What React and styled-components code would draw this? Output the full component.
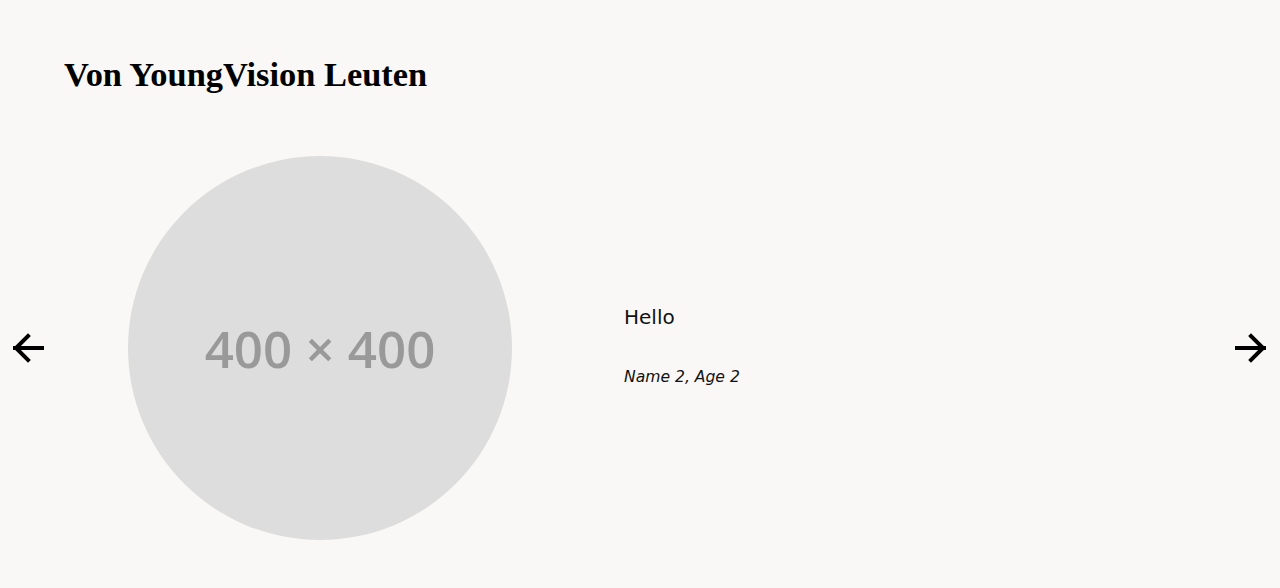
import React from "react";
import styled, { createGlobalStyle } from "styled-components";

const GlobalStyle = createGlobalStyle`
  html, body {
    margin: 0;
    padding: 0;
    background: #f9f8f6;
  }
  body {
    font-family: "DejaVu Sans", "Noto Sans", sans-serif;
    color: #111;
  }
`;

const Page = styled.main`
  height: 588px;
  box-sizing: border-box;
  padding-top: 52px;
  overflow: hidden;
`;

const Title = styled.h2`
  margin: 0 0 0 64px;
  font-family: "Liberation Serif", "DejaVu Serif", serif;
  font-weight: 700;
  font-size: 34.4px;
  line-height: 44px;
  color: #000;
`;

const Carousel = styled.section`
  position: relative;
  margin-top: 60px;
`;

const Slide = styled.div`
  display: flex;
  align-items: center;
  gap: 112px;
  padding-left: 128px;
`;

const Avatar = styled.div`
  width: 384px;
  height: 384px;
  border-radius: 50%;
  background: #dddddd;
  display: flex;
  align-items: center;
  justify-content: center;
  flex-shrink: 0;
  color: #999999;
  font-family: "Open Sans", "Liberation Sans", sans-serif;
  font-weight: 600;
  font-size: 51px;
`;

const Quote = styled.div`
  display: flex;
  flex-direction: column;
  gap: 39px;
  padding-bottom: 5px;
`;

const Message = styled.p`
  margin: 0;
  font-size: 20px;
  font-weight: 400;
  color: #111;
`;

const Author = styled.p`
  margin: 0;
  font-size: 15.6px;
  font-style: italic;
  color: #111;
`;

const NavButton = styled.button`
  position: absolute;
  top: 50%;
  transform: translateY(-50%);
  ${({ $side }) => ($side === "left" ? "left: 12px;" : "right: 13px;")}
  width: 32px;
  height: 32px;
  padding: 0;
  border: none;
  background: transparent;
  display: flex;
  align-items: center;
  justify-content: center;
  cursor: pointer;
`;

const Arrow = ({ dir }) => (
  <svg width="32" height="32" viewBox="0 0 32 32" fill="none">
    <g
      stroke="#000"
      strokeWidth="4"
      strokeLinecap="square"
      strokeLinejoin="miter"
      transform={dir === "right" ? "translate(32 0) scale(-1 1)" : undefined}
    >
      <path d="M3 16H30" />
      <path d="M16 4L4 16L16 28" />
    </g>
  </svg>
);

export default function App() {
  return (
    <Page>
      <GlobalStyle />
      <Title>Von YoungVision Leuten</Title>
      <Carousel>
        <NavButton $side="left" aria-label="Zurück">
          <Arrow dir="left" />
        </NavButton>
        <Slide>
          <Avatar>400 × 400</Avatar>
          <Quote>
            <Message>Hello</Message>
            <Author>Name 2, Age 2</Author>
          </Quote>
        </Slide>
        <NavButton $side="right" aria-label="Weiter">
          <Arrow dir="right" />
        </NavButton>
      </Carousel>
    </Page>
  );
}
